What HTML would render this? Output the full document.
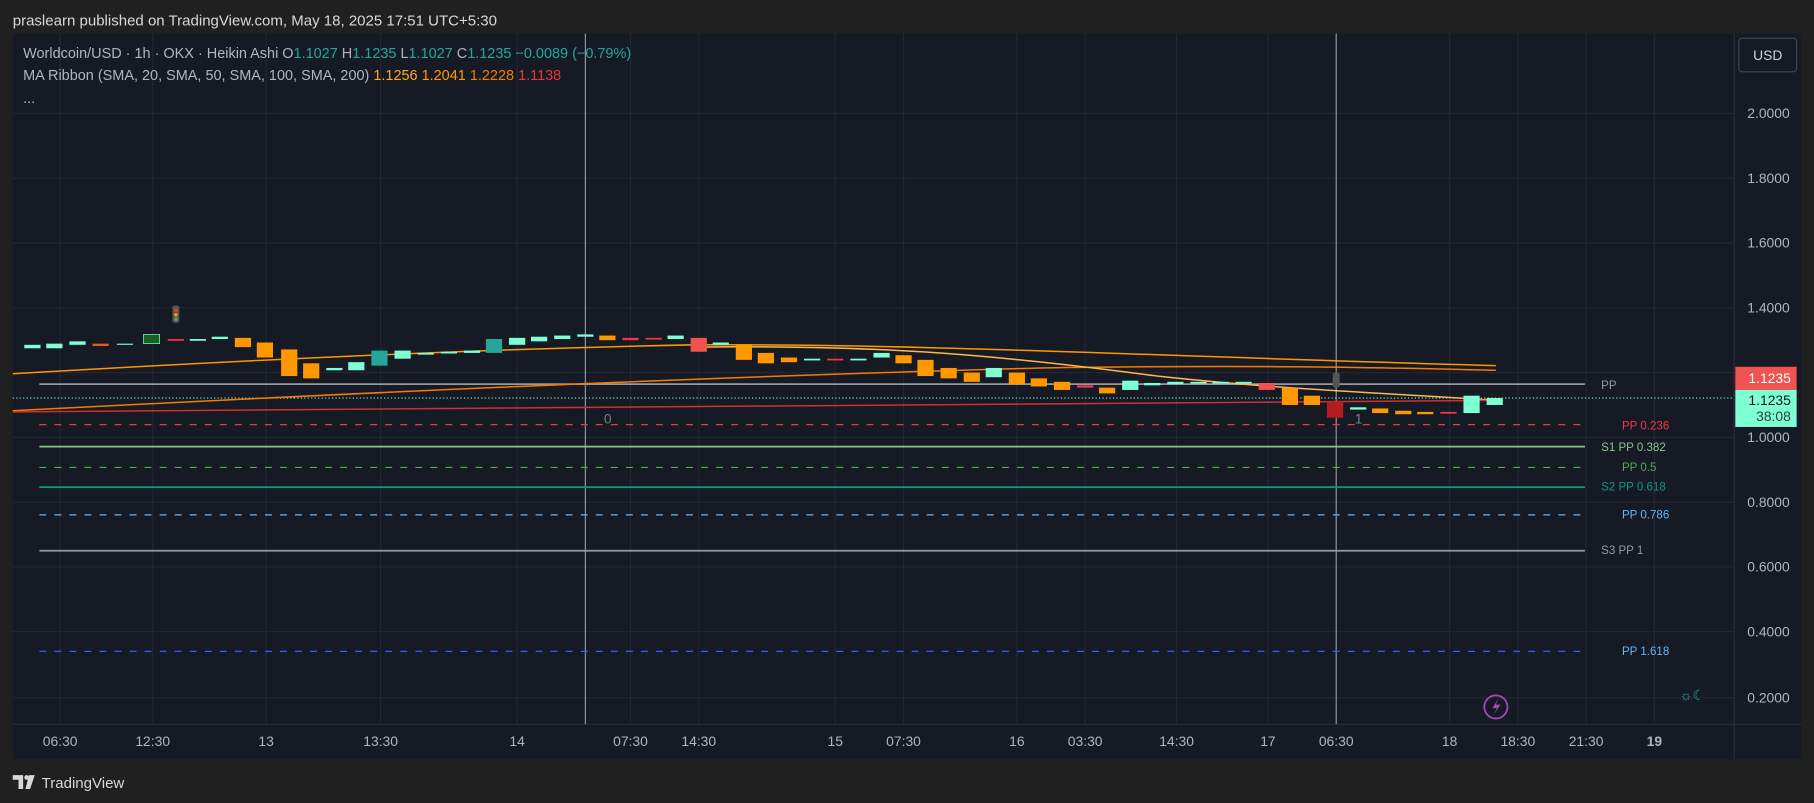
<!DOCTYPE html>
<html><head><meta charset="utf-8"><style>
html,body{margin:0;padding:0;background:#202020;width:1814px;height:803px;overflow:hidden}
svg{display:block}
text{font-family:"Liberation Sans",sans-serif}
</style></head><body>
<svg width="1814" height="803" viewBox="0 0 1568 694" xmlns="http://www.w3.org/2000/svg">
<rect width="1568" height="694" fill="#202020"/>
<text x="11" y="22" font-size="13" fill="#d8d8d8">praslearn published on TradingView.com, May 18, 2025 17:51 UTC+5:30</text>
<rect x="11" y="29" width="1546" height="627" fill="#161a25"/>
<g stroke="#232734" stroke-width="1">
<line x1="11" y1="98" x2="1499" y2="98"/><line x1="11" y1="154" x2="1499" y2="154"/><line x1="11" y1="210" x2="1499" y2="210"/><line x1="11" y1="266" x2="1499" y2="266"/><line x1="11" y1="322" x2="1499" y2="322"/><line x1="11" y1="378" x2="1499" y2="378"/><line x1="11" y1="434" x2="1499" y2="434"/><line x1="11" y1="490" x2="1499" y2="490"/><line x1="11" y1="546" x2="1499" y2="546"/><line x1="11" y1="603" x2="1499" y2="603"/>
<line x1="52" y1="29" x2="52" y2="626"/><line x1="132" y1="29" x2="132" y2="626"/><line x1="230" y1="29" x2="230" y2="626"/><line x1="329" y1="29" x2="329" y2="626"/><line x1="447" y1="29" x2="447" y2="626"/><line x1="545" y1="29" x2="545" y2="626"/><line x1="604" y1="29" x2="604" y2="626"/><line x1="722" y1="29" x2="722" y2="626"/><line x1="781" y1="29" x2="781" y2="626"/><line x1="879" y1="29" x2="879" y2="626"/><line x1="938" y1="29" x2="938" y2="626"/><line x1="1017" y1="29" x2="1017" y2="626"/><line x1="1096" y1="29" x2="1096" y2="626"/><line x1="1253" y1="29" x2="1253" y2="626"/><line x1="1312" y1="29" x2="1312" y2="626"/><line x1="1371" y1="29" x2="1371" y2="626"/><line x1="1430" y1="29" x2="1430" y2="626"/>
</g>
<line x1="1499" y1="29" x2="1499" y2="656" stroke="#2a2e39"/>
<line x1="11" y1="626" x2="1557" y2="626" stroke="#2a2e39"/>
<line x1="506" y1="29" x2="506" y2="626" stroke="#9598a1"/>
<line x1="1155" y1="29" x2="1155" y2="626" stroke="#9598a1"/>
<line x1="34" y1="332" x2="1370" y2="332" stroke="#9598a1" stroke-width="1.5"/>
<line x1="34" y1="367" x2="1370" y2="367" stroke="#f23645" stroke-dasharray="6,7"/>
<line x1="34" y1="386" x2="1370" y2="386" stroke="#81c784" stroke-width="1.5"/>
<line x1="34" y1="404" x2="1370" y2="404" stroke="#4caf50" stroke-dasharray="6,7"/>
<line x1="34" y1="421" x2="1370" y2="421" stroke="#089981" stroke-width="1.5"/>
<line x1="34" y1="445" x2="1370" y2="445" stroke="#64b5f6" stroke-dasharray="6,7"/>
<line x1="34" y1="476" x2="1370" y2="476" stroke="#9598a1" stroke-width="1.5"/>
<line x1="34" y1="563" x2="1370" y2="563" stroke="#2962ff" stroke-dasharray="6,7"/>
<g font-size="10">
<text x="1384" y="336" fill="#9598a1">PP</text>
<text x="1402" y="371" fill="#f23645">PP 0.236</text>
<text x="1384" y="390" fill="#81c784">S1 PP 0.382</text>
<text x="1402" y="407" fill="#4caf50">PP 0.5</text>
<text x="1384" y="424" fill="#089981">S2 PP 0.618</text>
<text x="1402" y="448" fill="#64b5f6">PP 0.786</text>
<text x="1384" y="479" fill="#9598a1">S3 PP 1</text>
<text x="1402" y="566" fill="#64b5f6">PP 1.618</text>
<text x="522" y="366" font-size="12" fill="#787b86">0</text>
<text x="1171" y="366" font-size="12" fill="#787b86">1</text>
</g>
<line x1="11" y1="344" x2="1499" y2="344" stroke="#7fffd4" stroke-dasharray="1,2"/>
<g fill="none" stroke-width="1.3">
<path d="M11 323 C200 312 400 302 600 298 C800 297 1000 308 1293 316" stroke="#ff9800"/>
<path d="M11 355 C300 340 600 326 900 318 C1100 315 1200 318 1293 320" stroke="#f57c00"/>
<path d="M600 300 C750 298 850 305 1000 325 C1100 336 1200 340 1293 346" stroke="#ffb74d"/>
<path d="M11 356 C400 350 800 348 1293 346" stroke="#d32f2f"/>
</g>
<g>
<rect x="21" y="298" width="14" height="3" fill="#7fffd4"/>
<rect x="40" y="297" width="14" height="4" fill="#7fffd4"/>
<rect x="60" y="295" width="14" height="3" fill="#7fffd4"/>
<rect x="80" y="297" width="14" height="2" fill="#f4511e"/>
<rect x="101" y="297" width="14" height="1" fill="#7fffd4"/>
<rect x="124" y="289" width="14" height="8" fill="#1b5e20" stroke="#7fffd4" stroke-width="0.6"/>
<rect x="145" y="293" width="14" height="1.5" fill="#f23645"/>
<rect x="164" y="293" width="14" height="1.5" fill="#7fffd4"/>
<rect x="183" y="291" width="14" height="2" fill="#7fffd4"/>
<rect x="203" y="292" width="14" height="8" fill="#ff9800"/>
<rect x="222" y="296" width="14" height="13" fill="#ff9800"/>
<rect x="243" y="302" width="14" height="23" fill="#ff9800"/>
<rect x="262" y="314" width="14" height="13" fill="#ff9800"/>
<rect x="282" y="318" width="14" height="2" fill="#7fffd4"/>
<rect x="301" y="313" width="14" height="7" fill="#7fffd4"/>
<rect x="321" y="303" width="14" height="13" fill="#26a69a"/>
<rect x="341" y="303" width="14" height="7" fill="#7fffd4"/>
<rect x="361" y="305" width="14" height="1.5" fill="#7fffd4"/>
<rect x="381" y="304" width="14" height="1.5" fill="#7fffd4"/>
<rect x="401" y="303" width="14" height="2" fill="#7fffd4"/>
<rect x="420" y="293" width="14" height="12" fill="#26a69a"/>
<rect x="440" y="292" width="14" height="6" fill="#7fffd4"/>
<rect x="459" y="291" width="14" height="4" fill="#7fffd4"/>
<rect x="479" y="290" width="14" height="3" fill="#7fffd4"/>
<rect x="499" y="289" width="14" height="2" fill="#7fffd4"/>
<rect x="518" y="290" width="14" height="4" fill="#ff9800"/>
<rect x="538" y="292" width="14" height="2" fill="#f23645"/>
<rect x="558" y="292" width="14" height="1.5" fill="#f23645"/>
<rect x="577" y="290" width="14" height="3" fill="#7fffd4"/>
<rect x="597" y="292" width="14" height="12" fill="#ef5350"/>
<rect x="616" y="296" width="14" height="2" fill="#7fffd4"/>
<rect x="636" y="298" width="14" height="13" fill="#ff9800"/>
<rect x="655" y="305" width="14" height="9" fill="#ff9800"/>
<rect x="675" y="309" width="14" height="4" fill="#ff9800"/>
<rect x="695" y="310" width="14" height="1.5" fill="#7fffd4"/>
<rect x="715" y="310" width="14" height="1.5" fill="#f23645"/>
<rect x="735" y="310" width="14" height="1.5" fill="#7fffd4"/>
<rect x="755" y="305" width="14" height="4" fill="#7fffd4"/>
<rect x="774" y="307" width="14" height="7" fill="#ff9800"/>
<rect x="793" y="311" width="14" height="14" fill="#ff9800"/>
<rect x="813" y="318" width="14" height="9" fill="#ff9800"/>
<rect x="833" y="322" width="14" height="8" fill="#ff9800"/>
<rect x="852" y="318" width="14" height="8" fill="#7fffd4"/>
<rect x="872" y="322" width="14" height="10" fill="#ff9800"/>
<rect x="891" y="327" width="14" height="7" fill="#ff9800"/>
<rect x="911" y="330" width="14" height="7" fill="#ff9800"/>
<rect x="931" y="333" width="14" height="2" fill="#f23645"/>
<rect x="950" y="335" width="14" height="5" fill="#ff9800"/>
<rect x="970" y="329" width="14" height="8" fill="#7fffd4"/>
<rect x="989" y="331" width="14" height="2" fill="#7fffd4"/>
<rect x="1009" y="330" width="14" height="2" fill="#7fffd4"/>
<rect x="1029" y="330" width="14" height="1.5" fill="#7fffd4"/>
<rect x="1048" y="330" width="14" height="1.5" fill="#7fffd4"/>
<rect x="1068" y="330" width="14" height="1.5" fill="#7fffd4"/>
<rect x="1088" y="331" width="14" height="6" fill="#ef5350"/>
<rect x="1108" y="335" width="14" height="15" fill="#ff9800"/>
<rect x="1127" y="342" width="14" height="8" fill="#ff9800"/>
<rect x="1147" y="347" width="14" height="14" fill="#b71c1c"/>
<rect x="1167" y="352" width="14" height="2" fill="#7fffd4"/>
<rect x="1186" y="353" width="14" height="4" fill="#ff9800"/>
<rect x="1206" y="355" width="14" height="3" fill="#ff9800"/>
<rect x="1225" y="356" width="14" height="2" fill="#ff9800"/>
<rect x="1245" y="356" width="14" height="1.5" fill="#f23645"/>
<rect x="1265" y="342" width="14" height="15" fill="#7fffd4"/>
<rect x="1285" y="344" width="14" height="6" fill="#7fffd4"/>
</g>
<rect x="149" y="264" width="6" height="15" rx="2" fill="#555"/><circle cx="152" cy="268" r="1.5" fill="#f23645"/><circle cx="152" cy="272" r="1.5" fill="#ff9800"/><circle cx="152" cy="276" r="1.5" fill="#4caf50"/>
<rect x="1152" y="322" width="6" height="13" rx="2" fill="#555"/>
<g font-size="12.5" xml:space="preserve">
<text x="20" y="50" fill="#b2b5be">Worldcoin/USD · 1h · OKX · Heikin Ashi  O<tspan fill="#26a69a">1.1027</tspan>  H<tspan fill="#26a69a">1.1235</tspan>  L<tspan fill="#26a69a">1.1027</tspan>  C<tspan fill="#26a69a">1.1235  −0.0089 (−0.79%)</tspan></text>
<text x="20" y="69" fill="#b2b5be">MA Ribbon (SMA, 20, SMA, 50, SMA, 100, SMA, 200)  <tspan fill="#ffa726">1.1256</tspan>  <tspan fill="#ff9800">1.2041</tspan>  <tspan fill="#f57c00">1.2228</tspan>  <tspan fill="#e53935">1.1138</tspan></text>
<text x="20" y="89" fill="#b2b5be">...</text>
</g>
<rect x="1503" y="33" width="50" height="29" rx="3" fill="#161a25" stroke="#434651"/>
<text x="1528" y="52" font-size="12" fill="#d1d4dc" text-anchor="middle">USD</text>
<g font-size="12" fill="#b2b5be" text-anchor="end">
<text x="1547" y="102">2.0000</text><text x="1547" y="158">1.8000</text><text x="1547" y="214">1.6000</text><text x="1547" y="270">1.4000</text><text x="1547" y="382">1.0000</text><text x="1547" y="438">0.8000</text><text x="1547" y="494">0.6000</text><text x="1547" y="550">0.4000</text><text x="1547" y="607">0.2000</text>
</g>
<rect x="1500" y="317" width="53" height="20" fill="#f05350"/>
<text x="1548" y="331" font-size="12" fill="#fff" text-anchor="end">1.1235</text>
<rect x="1500" y="337" width="53" height="32" fill="#7fffd4"/>
<text x="1548" y="350" font-size="12" fill="#131722" text-anchor="end">1.1235</text>
<text x="1548" y="364" font-size="12" fill="#2c3e3a" text-anchor="end">38:08</text>
<g font-size="12" fill="#b2b5be" text-anchor="middle">
<text x="52" y="645">06:30</text><text x="132" y="645">12:30</text><text x="230" y="645">13</text><text x="329" y="645">13:30</text><text x="447" y="645">14</text><text x="545" y="645">07:30</text><text x="604" y="645">14:30</text><text x="722" y="645">15</text><text x="781" y="645">07:30</text><text x="879" y="645">16</text><text x="938" y="645">03:30</text><text x="1017" y="645">14:30</text><text x="1096" y="645">17</text><text x="1155" y="645">06:30</text><text x="1253" y="645">18</text><text x="1312" y="645">18:30</text><text x="1371" y="645">21:30</text><text x="1430" y="645" font-weight="bold">19</text>
</g>
<circle cx="1293" cy="611" r="10" fill="none" stroke="#ab47bc" stroke-width="1.5"/>
<path d="M1295 604 L1290 612 L1294 612 L1291 618 L1297 609 L1293 609 Z" fill="#ab47bc"/>
<text x="1452" y="605" font-size="12" fill="#26a69a">☼☾</text>
<path d="M11 670 h9 v12 h-4 v-8 h-5z" fill="#d8d8d8"/><circle cx="23" cy="672" r="2" fill="#d8d8d8"/><path d="M25 670 h5 l-4 12 h-4z" fill="#d8d8d8"/>
<text x="36" y="681" font-size="13" fill="#d8d8d8">TradingView</text>
</svg>
</body></html>
